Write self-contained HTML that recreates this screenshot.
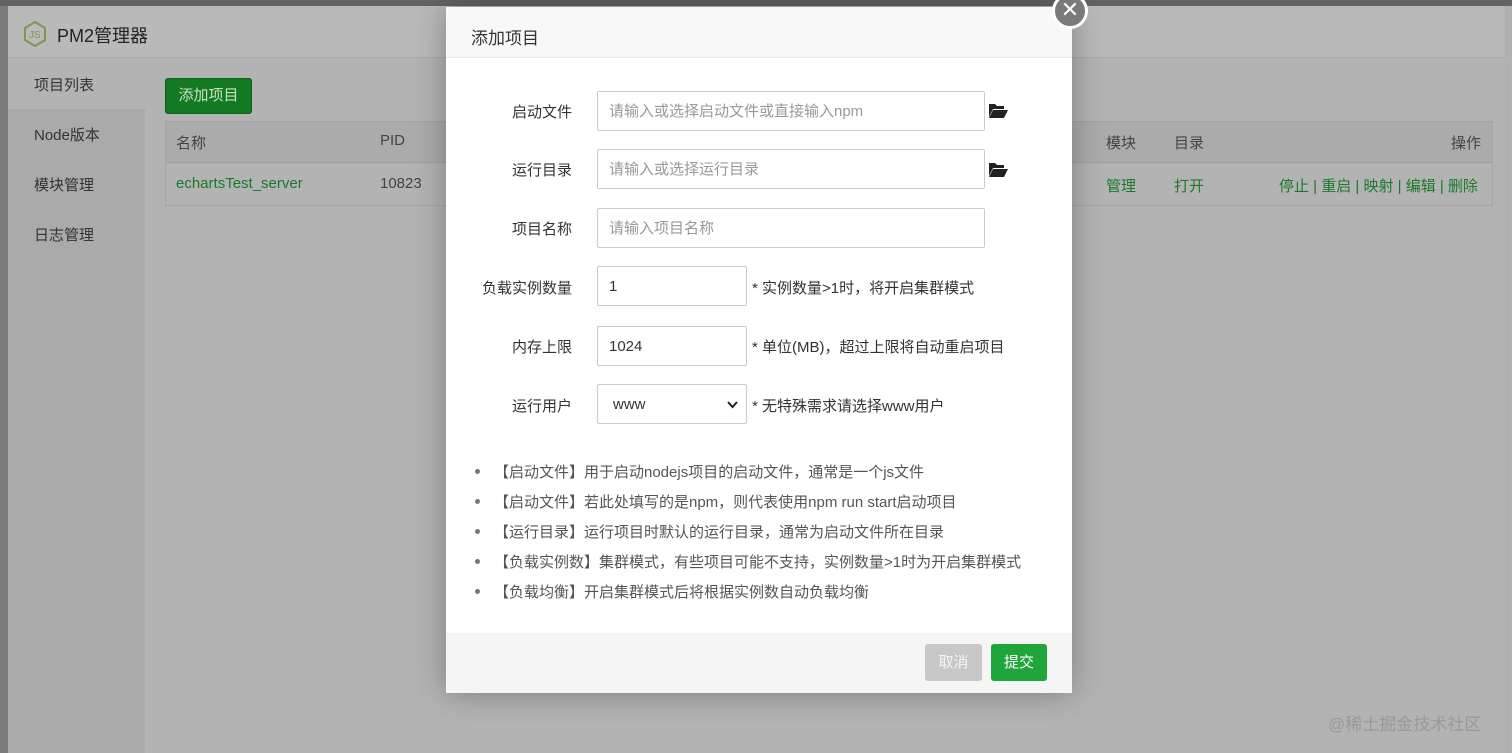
<!DOCTYPE html>
<html><head><meta charset="utf-8"><style>
*{box-sizing:border-box;margin:0;padding:0}
body{width:1512px;height:753px;overflow:hidden;position:relative;background:#b3b3b3;font-family:"Liberation Sans","Noto Sans CJK SC",sans-serif;font-size:15px;color:#333}
.a{position:absolute}
.lbl{position:absolute;width:126px;text-align:right;font-size:15px;color:#333}
.inp{position:absolute;left:597px;height:40px;border:1px solid #ccc;border-radius:2px;background:#fff;font-size:15px;padding-left:11px;line-height:40px}
.ph{color:#999}
.note{position:absolute;left:752px;font-size:15px;color:#333}
.li{position:absolute;left:472px;font-size:15px;color:#555}
.li b{display:inline-block;width:5px;height:5px;border-radius:50%;background:#777;margin:0 14px 3px 3px;vertical-align:middle}
.g{color:#1a7a2a}
</style></head><body>
<div class="a" style="left:0;top:0;width:1512px;height:6px;background:#636363"></div>
<div class="a" style="left:0;top:6px;width:8px;height:747px;background:#7a7a7a"></div>
<div class="a" style="left:1505px;top:6px;width:7px;height:747px;background:#b0b0b0"></div>
<div class="a" style="left:8px;top:6px;width:1497px;height:52px;background:#b9b9b9;border-bottom:1px solid #ababab"></div>
<svg class="a" style="left:23px;top:21px" width="24" height="26" viewBox="0 0 24 26"><path d="M12 1 L22 7 V19 L12 25 L2 19 V7 Z" fill="none" stroke="#7a9a4a" stroke-width="2"/><text x="6" y="17" font-size="10" fill="#7a9a4a" font-family="Liberation Sans">JS</text></svg>
<div class="a" style="left:57px;top:22px;font-size:18px;color:#222">PM2管理器</div>
<div class="a" style="left:8px;top:59px;width:137px;height:694px;background:#aaaaaa"></div>
<div class="a" style="left:8px;top:59px;width:137px;height:50px;background:#b3b3b3"></div>
<div class="a" style="left:34px;top:74px">项目列表</div>
<div class="a" style="left:34px;top:124px">Node版本</div>
<div class="a" style="left:34px;top:174px">模块管理</div>
<div class="a" style="left:34px;top:224px">日志管理</div>
<div class="a" style="left:165px;top:78px;width:87px;height:36px;background:#137a22;border:1px solid #0f5e1a;border-radius:3px;color:#c8e0c8;line-height:34px;text-align:center">添加项目</div>
<div class="a" style="left:165px;top:121px;width:1328px;height:85px;border:1px solid #a5a5a5"></div>
<div class="a" style="left:166px;top:122px;width:1326px;height:41px;background:#ababab;border-bottom:1px solid #a0a0a0"></div>
<div class="a" style="left:176px;top:132px;color:#444">名称</div>
<div class="a" style="left:380px;top:132px;color:#444">PID</div>
<div class="a" style="left:1106px;top:132px;color:#444">模块</div>
<div class="a" style="left:1174px;top:132px;color:#444">目录</div>
<div class="a" style="left:1451px;top:132px;color:#444">操作</div>
<div class="a g" style="left:176px;top:175px">echartsTest_server</div>
<div class="a" style="left:380px;top:175px;color:#444">10823</div>
<div class="a g" style="left:1106px;top:175px">管理</div>
<div class="a g" style="left:1174px;top:175px">打开</div>
<div class="a g" style="left:1279px;top:175px">停止 | 重启 | 映射 | 编辑 | 删除</div>
<div class="a" style="left:1328px;top:710px;font-size:17px;color:#999">@稀土掘金技术社区</div>

<div class="a" style="left:446px;top:7px;width:626px;height:686px;background:#fff;box-shadow:0 0 30px rgba(0,0,0,.3)"></div>
<div class="a" style="left:446px;top:7px;width:626px;height:51px;background:#f8f8f8;border-bottom:1px solid #e8e8e8"></div>
<div class="a" style="left:471px;top:24px;font-size:17px;color:#333">添加项目</div>
<div class="a" style="left:1052px;top:-7px;width:36px;height:36px;border-radius:50%;background:#7a7a7a;border:3px solid #fff;color:#fff;font-size:22px;line-height:28px;text-align:center">✕</div>

<div class="lbl" style="left:446px;top:101px">启动文件</div>
<div class="inp" style="top:91px;width:388px"><span class="ph">请输入或选择启动文件或直接输入npm</span></div>
<div class="lbl" style="left:446px;top:159px">运行目录</div>
<div class="inp" style="top:149px;width:388px"><span class="ph">请输入或选择运行目录</span></div>
<svg class="a" style="left:989px;top:103px" width="19" height="15" viewBox="0 0 19 15"><path d="M0 1h6l2 2h7v3H4L0 14Z" fill="#222"/><path d="M4 7h15l-4 8H0Z" fill="#222"/></svg>
<svg class="a" style="left:989px;top:162px" width="19" height="15" viewBox="0 0 19 15"><path d="M0 1h6l2 2h7v3H4L0 14Z" fill="#222"/><path d="M4 7h15l-4 8H0Z" fill="#222"/></svg>
<div class="lbl" style="left:446px;top:218px">项目名称</div>
<div class="inp" style="top:208px;width:388px"><span class="ph">请输入项目名称</span></div>
<div class="lbl" style="left:446px;top:277px">负载实例数量</div>
<div class="inp" style="top:266px;width:150px">1</div>
<div class="note" style="top:277px">* 实例数量&gt;1时，将开启集群模式</div>
<div class="lbl" style="left:446px;top:336px">内存上限</div>
<div class="inp" style="top:326px;width:150px">1024</div>
<div class="note" style="top:336px">* 单位(MB)，超过上限将自动重启项目</div>
<div class="lbl" style="left:446px;top:395px">运行用户</div>
<div class="inp" style="top:384px;width:150px;padding-left:15px">www<svg style="position:absolute;right:8px;top:16px" width="11" height="8" viewBox="0 0 11 8"><path d="M1 1l4.5 5L10 1" fill="none" stroke="#222" stroke-width="2"/></svg></div>
<div class="note" style="top:395px">* 无特殊需求请选择www用户</div>

<div class="li" style="top:461px"><b></b>【启动文件】用于启动nodejs项目的启动文件，通常是一个js文件</div>
<div class="li" style="top:491px"><b></b>【启动文件】若此处填写的是npm，则代表使用npm run start启动项目</div>
<div class="li" style="top:521px"><b></b>【运行目录】运行项目时默认的运行目录，通常为启动文件所在目录</div>
<div class="li" style="top:551px"><b></b>【负载实例数】集群模式，有些项目可能不支持，实例数量&gt;1时为开启集群模式</div>
<div class="li" style="top:581px"><b></b>【负载均衡】开启集群模式后将根据实例数自动负载均衡</div>

<div class="a" style="left:446px;top:633px;width:626px;height:60px;background:#f5f5f5"></div>
<div class="a" style="left:925px;top:644px;width:57px;height:37px;background:#c8c8c8;border-radius:3px;color:#f4f4f4;line-height:37px;text-align:center">取消</div>
<div class="a" style="left:991px;top:644px;width:56px;height:37px;background:#20a53a;border-radius:3px;color:#fff;line-height:37px;text-align:center">提交</div>
</body></html>
